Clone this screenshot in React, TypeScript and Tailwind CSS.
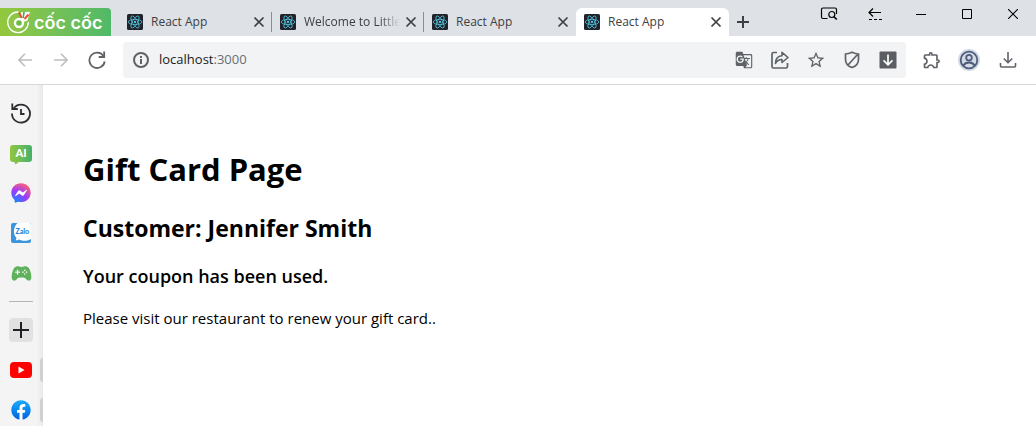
import type { ReactNode } from "react";
import { IoGameController } from "react-icons/io5";
import { FaFacebook, FaFacebookMessenger } from "react-icons/fa";
import { MdGTranslate, MdOutlineExtension, MdStarBorder } from "react-icons/md";

const tabs = [
  { title: "React App", active: false },
  { title: "Welcome to Little", active: false },
  { title: "React App", active: false },
  { title: "React App", active: true },
];

function Stroke({ size = 20, width = 2, children, className = "" }: { size?: number; width?: number; children: ReactNode; className?: string }) {
  return (
    <svg width={size} height={size} viewBox={`0 0 ${size} ${size}`} fill="none" stroke="currentColor" strokeWidth={width} className={`shrink-0 ${className}`} aria-hidden="true">
      {children}
    </svg>
  );
}

function ReactFavicon() {
  return (
    <svg width="16" height="16" viewBox="0 0 16 16" fill="none" stroke="#53c1de" strokeWidth="0.8" className="shrink-0" aria-hidden="true">
      <rect width="16" height="16" rx="1.5" fill="#20232a" stroke="none" />
      <ellipse cx="8" cy="8" rx="6.8" ry="2.6" />
      <ellipse cx="8" cy="8" rx="6.8" ry="2.6" transform="rotate(60 8 8)" />
      <ellipse cx="8" cy="8" rx="6.8" ry="2.6" transform="rotate(120 8 8)" />
      <circle cx="8" cy="8" r="1.2" fill="#53c1de" stroke="none" />
    </svg>
  );
}

function BrandLogo() {
  return (
    <a href="#home" aria-label="Cốc Cốc" className="mr-2 flex h-7 w-[111px] shrink-0 items-center rounded-tr bg-linear-to-r from-[#93c83d] to-[#4fb968] pl-[6px] text-white">
      <svg width="25" height="26" viewBox="0 0 25 26" fill="none" stroke="#fff" aria-hidden="true">
        <path d="M12 3A10.300 10.300 0 1 0 22.300 13.500" strokeWidth="1.300" strokeLinecap="round" />
        <path d="M15 3.200L23.800 2.800 21.500 11.500 17.500 13 14.800 10z" fill="#fff" stroke="none" />
        <path d="M13 3.500l2.800 5.500" stroke="#f04e37" strokeWidth="2" />
        <path d="M18 3l-.8 6" stroke="#43a84c" strokeWidth="1.600" />
        <path d="M22.500 5.500l-4 4.500" stroke="#f04e37" strokeWidth="2" />
        <circle cx="13" cy="14" r="4" fill="#6dba45" strokeWidth="2.400" />
      </svg>
      <span className="pt-px pl-[3px] font-['Inter'] text-lg leading-7 font-semibold">cốc cốc</span>
    </a>
  );
}

function CloseGlyph() {
  return (
    <Stroke size={12} width={1.7}>
      <path d="M1.500 1.500l9 9M10.500 1.500l-9 9" />
    </Stroke>
  );
}

function TabStrip() {
  return (
    <header className="flex h-9 bg-[#dee1e6] pt-2 text-[#3c4043]">
      <BrandLogo />
      <nav aria-label="Tabs" className="flex">
        {tabs.map((tab, i) => (
          <div key={i} className={`flex h-7 items-center pl-2 ${tab.active ? "w-[153px] rounded-t-md bg-white" : i === 0 ? "w-[153px]" : "w-[152px]"}`}>
            <ReactFavicon />
            <span className={`ml-2 flex-1 text-xs whitespace-nowrap ${tab.title.length > 12 ? "mask-r-from-75% mask-r-to-95%" : ""}`}>{tab.title}</span>
            <button aria-label={`Close ${tab.title}`} className="mr-[7px] flex size-3 shrink-0 items-center justify-center">
              <CloseGlyph />
            </button>
            {i < 2 && <span className="-ml-px h-5 w-px bg-[#8b8f94]" />}
          </div>
        ))}
      </nav>
      <button aria-label="New tab" className="ml-[6px] flex h-7 w-4 items-center justify-center">
        <Stroke size={12}>
          <path d="M6 0v12M0 6h12" />
        </Stroke>
      </button>
      <div className="-mt-2 ml-auto flex h-7 text-black">
        <button aria-label="Search tabs" className="flex w-[46px] items-center justify-center">
          <Stroke size={18} width={1.2}>
            <path d="M7.500 13.500H3a1.500 1.500 0 0 1-1.500-1.500V4.500A1.500 1.500 0 0 1 3 3h12a1.500 1.500 0 0 1 1.500 1.500V9" />
            <circle cx="11.800" cy="9.500" r="3" />
            <path d="M14 11.700l2.800 2.800" strokeWidth="1.600" />
          </Stroke>
        </button>
        <button aria-label="Restore tab" className="flex w-[46px] items-center justify-center">
          <Stroke size={14} width={1.2}>
            <path d="M13 5.500H1M5 1.500l-4 4 4 4" />
            <path d="M1 12.500h13" strokeDasharray="3 2" />
          </Stroke>
        </button>
        <button aria-label="Minimize" className="flex w-[46px] items-center justify-center">
          <Stroke size={10} width={1}>
            <path d="M0 5.500h10" />
          </Stroke>
        </button>
        <button aria-label="Maximize" className="flex w-[46px] items-center justify-center">
          <Stroke size={10} width={1}>
            <path d="M.5.5h9v9h-9z" />
          </Stroke>
        </button>
        <button aria-label="Close window" className="flex w-[46px] items-center justify-center">
          <Stroke size={10} width={1.1}>
            <path d="M0 0l10 10M10 0L0 10" />
          </Stroke>
        </button>
      </div>
    </header>
  );
}

function IconButton({ label, children, className = "" }: { label: string; children: ReactNode; className?: string }) {
  return (
    <button aria-label={label} className={`flex h-9 w-9 shrink-0 items-center justify-center ${className}`}>
      {children}
    </button>
  );
}

function Toolbar() {
  return (
    <div className="flex h-[49px] items-center border-b border-[#d6d8db] bg-white pr-[10px] pl-[7px] text-[#5f6368]">
      <IconButton label="Back" className="text-[#bbbdc0]">
        <Stroke size={14} width={1.6}>
          <path d="M14 7H1M7 .7L.9 7 7 13.300" />
        </Stroke>
      </IconButton>
      <IconButton label="Forward" className="text-[#bbbdc0]">
        <Stroke size={14} width={1.6}>
          <path d="M0 7h13M7 .7L13.100 7 7 13.300" />
        </Stroke>
      </IconButton>
      <IconButton label="Reload">
        <Stroke size={18} width={1.8}>
          <path d="M15.500 5A7.700 7.700 0 1 0 16.700 10.500" />
          <path d="M16.200 0.500v5.500h-5.500" />
        </Stroke>
      </IconButton>
      <div className="ml-2 flex h-9 min-w-0 flex-1 items-center rounded bg-[#f1f3f4]">
        <Stroke size={18} className="ml-[9px]">
          <circle cx="9" cy="9" r="7" />
          <path d="M9 8v5M9 5v2" />
        </Stroke>
        <label className="relative ml-[9px] flex h-9 min-w-0 flex-1 items-center text-[13px]">
          <input aria-label="Address" defaultValue="localhost:3000" className="w-full bg-transparent text-transparent caret-black outline-none" />
          <span aria-hidden="true" className="pointer-events-none absolute left-0 bg-[#f1f3f4] text-[#202124]">
            localhost<span className="text-[#6b6f74]">:3000</span>
          </span>
        </label>
        <IconButton label="Translate">
          <MdGTranslate size={18} />
        </IconButton>
        <IconButton label="Share">
          <Stroke size={18} width={1.7}>
            <path d="M6 1.500H2.500a1.500 1.500 0 0 0-1.500 1.500v12.500A1.500 1.500 0 0 0 2.500 17h12.500a1.500 1.500 0 0 0 1.500-1.500V12" />
            <path d="M11 1.300l6 5.200-6 5V8.500C8 8.500 6 9.500 4.500 12.500 4.500 8 7 5 11 4.700z" strokeWidth="1.600" strokeLinejoin="round" />
          </Stroke>
        </IconButton>
        <IconButton label="Bookmark">
          <MdStarBorder size={20} />
        </IconButton>
        <IconButton label="Ad blocking">
          <Stroke size={18} width={1.7}>
            <path d="M9 1.300C6.500 2.500 4.500 3 2.500 3v5.500c0 4 2.500 6.700 6.500 8 4-1.300 6.500-4 6.500-8V3c-2 0-4-.5-6.500-1.700zM14.500 3.500L5 14" />
          </Stroke>
        </IconButton>
        <IconButton label="Save media">
          <svg width="18" height="18" viewBox="0 0 18 18" fill="none" aria-hidden="true">
            <rect x="0.500" y="0.500" width="17" height="17" rx="1" fill="#5a5d61" />
            <path d="M9 3.500v10M4.500 9.300L9 13.800l4.500-4.500" stroke="#fff" strokeWidth="1.700" />
          </svg>
        </IconButton>
      </div>
      <div className="ml-2 flex gap-px">
        <IconButton label="Extensions">
          <MdOutlineExtension size={20} />
        </IconButton>
        <IconButton label="Profile">
          <svg width="22" height="22" viewBox="0 0 22 22" fill="none" stroke="#4d5b7c" strokeWidth="1.800" aria-hidden="true">
            <circle cx="11" cy="11" r="11" fill="#d3dae5" stroke="none" />
            <circle cx="11" cy="11" r="8.300" />
            <circle cx="11" cy="8.700" r="2.800" />
            <path d="M5.500 16.500c1-2 3-3 5.500-3s4.500 1 5.500 3" />
          </svg>
        </IconButton>
        <IconButton label="Downloads" className="ml-[2px]">
          <Stroke size={18} width={1.6}>
            <path d="M9 1v10.500M4.800 7.500L9 11.700l4.200-4.200M1.500 12v3a1 1 0 0 0 1 1h13a1 1 0 0 0 1-1v-3" />
          </Stroke>
        </IconButton>
      </div>
    </div>
  );
}

function Sidebar() {
  return (
    <aside className="flex w-[43px] shrink-0 flex-col bg-linear-to-r from-[#f4f4f4] from-85% to-[#e9e9e9] pt-2">
      <SideItem label="History">
        <Stroke size={22} width={1.8} className="text-[#2b2d30]">
          <path d="M3.600 6.500A9 9 0 1 1 2 11.500" />
          <path d="M2.300 1.500v5.500h5.500" />
          <path d="M11 7v5h3.500" />
        </Stroke>
      </SideItem>
      <SideItem label="AI chat">
        <span className="relative flex h-[17px] w-[22px] items-center justify-center rounded-[3px] bg-linear-to-r from-[#8fc63e] to-[#45b069] font-['Lato'] text-[11px] leading-4 font-black text-white">
          AI
          <svg width="6" height="4" viewBox="0 0 6 4" className="absolute top-4 left-1" aria-hidden="true">
            <path d="M0 0h6L1.500 3.500z" fill="#82c143" />
          </svg>
        </span>
      </SideItem>
      <SideItem label="Messenger">
        <svg width="20" height="20" viewBox="0 0 20 20" aria-hidden="true">
          <defs>
            <radialGradient id="messenger" cx="0.2" cy="1" r="1.100">
              <stop offset="0" stopColor="#0a8cff" />
              <stop offset="0.550" stopColor="#9a3bff" />
              <stop offset="1" stopColor="#ff6170" />
            </radialGradient>
          </defs>
          <circle cx="10" cy="10" r="8" fill="#fff" />
          <FaFacebookMessenger size={20} fill="url(#messenger)" />
        </svg>
      </SideItem>
      <SideItem label="Zalo">
        <svg width="20" height="20" viewBox="0 0 20 20" aria-hidden="true">
          <rect width="20" height="20" rx="2" fill="#3b94dc" />
          <path d="M6.500 0H18a2 2 0 0 1 2 2v14c-2.500 2-8 2.500-12 .5-1.500.8-2.500 1-3.500.8.800-.8 1-1.500.8-2.500C2 11 2 4.500 6.500 0z" fill="#fff" />
          <text x="4.500" y="11" fontSize="7" fontWeight="900" fontFamily="Lato, sans-serif" fill="#2380d0">Zalo</text>
        </svg>
      </SideItem>
      <SideItem label="Games">
        <IoGameController size={21} color="#5db25b" />
      </SideItem>
      <hr className="mt-2 mb-4 ml-[9px] w-6 border-[#b5b5b5]" />
      <button aria-label="Add shortcut" className="mb-2 ml-[9px] flex size-6 shrink-0 items-center justify-center rounded bg-[#e1e1e1] text-[#202124]">
        <Stroke size={16} width={2}>
          <path d="M8 0v16M0 8h16" />
        </Stroke>
      </button>
      <SideItem label="YouTube" open>
        <svg width="22" height="16" viewBox="0 0 22 16" aria-hidden="true">
          <rect width="22" height="16" rx="4" fill="#f00" />
          <path d="M8.500 4.500v7l6-3.500z" fill="#fff" />
        </svg>
      </SideItem>
      <SideItem label="Facebook" open>
        <svg width="20" height="20" viewBox="0 0 20 20" aria-hidden="true">
          <defs>
            <linearGradient id="facebook" x1="0" y1="0" x2="0" y2="1">
              <stop offset="0" stopColor="#18acfe" />
              <stop offset="1" stopColor="#0163e0" />
            </linearGradient>
          </defs>
          <circle cx="10" cy="10" r="9.500" fill="#fff" />
          <FaFacebook size={20} fill="url(#facebook)" />
        </svg>
      </SideItem>
    </aside>
  );
}

function SideItem({ label, open = false, children }: { label: string; open?: boolean; children: ReactNode }) {
  return (
    <button aria-label={label} className="relative flex h-10 w-full shrink-0 items-center justify-center pr-px">
      {children}
      {open && <span className="absolute top-2 right-0 h-6 w-[3px] rounded-l bg-[#d0d0d0]" />}
    </button>
  );
}

export default function App() {
  return (
    <div className="flex h-screen flex-col overflow-hidden bg-white font-['Open_Sans',sans-serif]">
      <TabStrip />
      <Toolbar />
      <div className="flex min-h-0 flex-1">
        <Sidebar />
        <main className="flex-1 px-10 pt-16 text-black">
          <h1 className="text-[31px] leading-10 font-bold">Gift Card Page</h1>
          <h2 className="mt-[23px] text-[23px] leading-8 font-bold">Customer: Jennifer Smith</h2>
          <h3 className="mt-5 text-lg leading-6 font-semibold">Your coupon has been used.</h3>
          <p className="mt-5 text-[15px] leading-5">Please visit our restaurant to renew your gift card..</p>
        </main>
      </div>
    </div>
  );
}
